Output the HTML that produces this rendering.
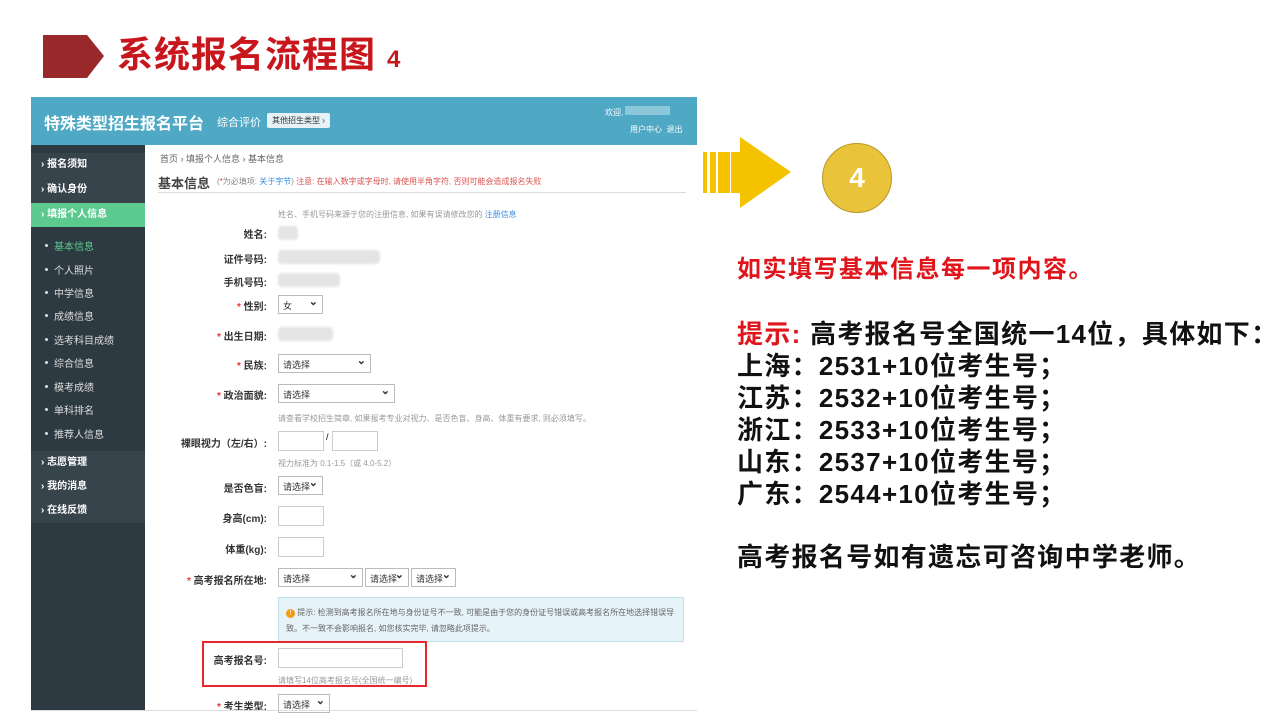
<!DOCTYPE html>
<html><head><meta charset="utf-8"><style>
*{margin:0;padding:0;box-sizing:border-box}
body{width:1280px;height:720px;background:#fff;position:relative;overflow:hidden;font-family:"Liberation Sans","Noto Sans CJK SC",sans-serif}
.a{position:absolute;white-space:nowrap}
.lb{position:absolute;right:1013px;font-size:10px;color:#333;font-weight:bold;white-space:nowrap}
.st{color:#e33}
.in{position:absolute;border:1px solid #ccc;background:#fff;height:20px}
.sel{position:absolute;border:1px solid #bbb;background:#fff;height:19px;font-size:9px;padding:3px 4px;color:#333}
.sel:after{content:"⌄";position:absolute;right:4px;top:-1px;font-size:11px;font-weight:bold}
.nt{position:absolute;font-size:8px;color:#999;white-space:nowrap}
.blur{position:absolute;background:#e4e4e4;border-radius:4px;height:14px;filter:blur(1px)}
.sb{position:absolute;left:31px;width:114px;color:#fff;font-size:10px;font-weight:bold;padding-left:10px;line-height:24px}
.sub{position:absolute;left:54px;font-size:10px;color:#ddd}
.sub:before{content:"";position:absolute;left:-9px;top:6px;width:3px;height:3px;border-radius:50%;background:#ddd}
.rt{position:absolute;left:737px;font-size:26px;font-weight:bold;color:#111;white-space:nowrap;line-height:32px;letter-spacing:1.3px}
</style></head><body>
<svg class="a" style="left:43px;top:35px" width="62" height="44"><polygon points="0,0 44,0 61,21 44,43 0,43" fill="#98282a"/></svg>
<div class="a" style="left:117px;top:33px;font-size:36px;font-weight:bold;color:#c8161d;line-height:44px;letter-spacing:1px">系统报名流程图 <span style="font-size:24px">4</span></div>

<div class="a" style="left:31px;top:97px;width:666px;height:48px;background:#4fa9c5"></div>
<div class="a" style="left:44px;top:110px;font-size:16px;font-weight:bold;color:#fff">特殊类型招生报名平台</div>
<div class="a" style="left:217px;top:114px;font-size:11px;color:#fff">综合评价</div>
<div class="a" style="left:267px;top:113px;font-size:8px;color:#333;background:#e6f2f6;border-radius:2px;padding:2px 5px">其他招生类型 ›</div>
<div class="a" style="left:605px;top:106px;font-size:8px;color:#fff">欢迎, <span style="display:inline-block;width:45px;height:9px;background:#8cc8da"></span></div>
<div class="a" style="left:630px;top:124px;font-size:8px;color:#fff">用户中心 &nbsp;退出</div>

<div class="a" style="left:31px;top:145px;width:114px;height:565px;background:#2e3a42"></div>
<div class="sb" style="top:153px;background:#37444c;height:25px">› 报名须知</div>
<div class="sb" style="top:178px;background:#37444c;height:25px">› 确认身份</div>
<div class="sb" style="top:203px;background:#5cc98f;height:24px">› 填报个人信息</div>
<div class="sub" style="top:238px;color:#5cc98f">基本信息</div>
<div class="sub" style="top:262px">个人照片</div>
<div class="sub" style="top:285px">中学信息</div>
<div class="sub" style="top:308px">成绩信息</div>
<div class="sub" style="top:332px">选考科目成绩</div>
<div class="sub" style="top:355px">综合信息</div>
<div class="sub" style="top:379px">模考成绩</div>
<div class="sub" style="top:402px">单科排名</div>
<div class="sub" style="top:426px">推荐人信息</div>
<div class="sb" style="top:451px;background:#37444c;height:24px">› 志愿管理</div>
<div class="sb" style="top:475px;background:#37444c;height:24px">› 我的消息</div>
<div class="sb" style="top:499px;background:#37444c;height:24px">› 在线反馈</div>

<div class="a" style="left:160px;top:152px;font-size:9px;color:#666">首页 › 填报个人信息 › 基本信息</div>
<div class="a" style="left:158px;top:173px;font-size:13px;color:#444;font-weight:bold">基本信息</div>
<div class="a" style="left:217px;top:176px;font-size:8px;color:#888">(<span class="st">*</span>为必填项: <span style="color:#3a8ee6">关于字节</span>) <span style="color:#d9534f">注意: 在输入数字或字母时, 请使用半角字符, 否则可能会造成报名失败</span></div>
<div class="a" style="left:158px;top:192px;width:528px;height:1px;background:#ddd"></div>
<div class="nt" style="left:278px;top:209px">姓名、手机号码来源于您的注册信息, 如果有误请修改您的 <span style="color:#3a8ee6">注册信息</span></div>

<div class="lb" style="top:226px">姓名:</div><div class="blur" style="left:278px;top:226px;width:20px"></div>
<div class="lb" style="top:251px">证件号码:</div><div class="blur" style="left:278px;top:250px;width:102px"></div>
<div class="lb" style="top:274px">手机号码:</div><div class="blur" style="left:278px;top:273px;width:62px"></div>
<div class="lb" style="top:298px"><span class="st">* </span>性别:</div><div class="sel" style="left:278px;top:295px;width:45px">女</div>
<div class="lb" style="top:328px"><span class="st">* </span>出生日期:</div><div class="blur" style="left:278px;top:327px;width:55px"></div>
<div class="lb" style="top:357px"><span class="st">* </span>民族:</div><div class="sel" style="left:278px;top:354px;width:93px">请选择</div>
<div class="lb" style="top:387px"><span class="st">* </span>政治面貌:</div><div class="sel" style="left:278px;top:384px;width:117px">请选择</div>
<div class="nt" style="left:278px;top:413px">请查看学校招生简章, 如果报考专业对视力、是否色盲、身高、体重有要求, 则必须填写。</div>
<div class="lb" style="top:435px">裸眼视力（左/右）:</div><div class="in" style="left:278px;top:431px;width:46px"></div><div class="a" style="left:326px;top:432px;font-size:9px">/</div><div class="in" style="left:332px;top:431px;width:46px"></div>
<div class="nt" style="left:278px;top:458px">视力标准为 0.1-1.5（或 4.0-5.2）</div>
<div class="lb" style="top:480px">是否色盲:</div><div class="sel" style="left:278px;top:476px;width:45px">请选择</div>
<div class="lb" style="top:510px">身高(cm):</div><div class="in" style="left:278px;top:506px;width:46px"></div>
<div class="lb" style="top:541px">体重(kg):</div><div class="in" style="left:278px;top:537px;width:46px"></div>
<div class="lb" style="top:572px"><span class="st">* </span>高考报名所在地:</div>
<div class="sel" style="left:278px;top:568px;width:85px">请选择</div><div class="sel" style="left:365px;top:568px;width:44px">请选择</div><div class="sel" style="left:411px;top:568px;width:45px">请选择</div>
<div class="a" style="left:278px;top:597px;width:406px;height:45px;background:#e6f3f8;border:1px solid #bfe0ec"></div>
<div class="a" style="left:286px;top:605px;font-size:8px;color:#666;line-height:16px;white-space:normal;width:392px"><span style="display:inline-block;width:9px;height:9px;border-radius:50%;background:#f39c12;color:#fff;font-size:7px;text-align:center;line-height:9px">!</span> 提示: 检测到高考报名所在地与身份证号不一致, 可能是由于您的身份证号错误或高考报名所在地选择错误导致。不一致不会影响报名, 如您核实完毕, 请忽略此项提示。</div>
<div class="a" style="left:202px;top:641px;width:225px;height:46px;border:2px solid #e8262b"></div>
<div class="lb" style="top:652px">高考报名号:</div><div class="in" style="left:278px;top:648px;width:125px"></div>
<div class="nt" style="left:278px;top:675px">请填写14位高考报名号(全国统一编号)</div>
<div class="lb" style="top:698px"><span class="st">* </span>考生类型:</div><div class="sel" style="left:278px;top:694px;width:52px">请选择</div>
<div class="a" style="left:31px;top:710px;width:666px;height:1px;background:#ddd"></div>

<svg class="a" style="left:700px;top:135px" width="95" height="75"><g fill="#f5c200"><rect x="3" y="17" width="4" height="41"/><rect x="10" y="17" width="6" height="41"/><rect x="18" y="17" width="12" height="41"/><polygon points="31,17 40,17 40,2 91,37 40,73 40,58 31,58"/></g></svg>
<div class="a" style="left:822px;top:143px;width:70px;height:70px;border-radius:50%;background:#e9c43a;border:1px solid #b8982a;color:#fff;font-size:28px;font-weight:bold;text-align:center;line-height:68px">4</div>

<div class="rt" style="top:254px;font-size:24px;color:#e0141b;letter-spacing:1.5px">如实填写基本信息每一项内容。</div>
<div class="rt" style="top:318px"><span style="color:#e0141b">提示:</span> 高考报名号全国统一14位，具体如下：</div>
<div class="rt" style="top:350px">上海：2531+10位考生号；</div>
<div class="rt" style="top:382px">江苏：2532+10位考生号；</div>
<div class="rt" style="top:414px">浙江：2533+10位考生号；</div>
<div class="rt" style="top:446px">山东：2537+10位考生号；</div>
<div class="rt" style="top:478px">广东：2544+10位考生号；</div>
<div class="rt" style="top:541px">高考报名号如有遗忘可咨询中学老师。</div>
</body></html>
